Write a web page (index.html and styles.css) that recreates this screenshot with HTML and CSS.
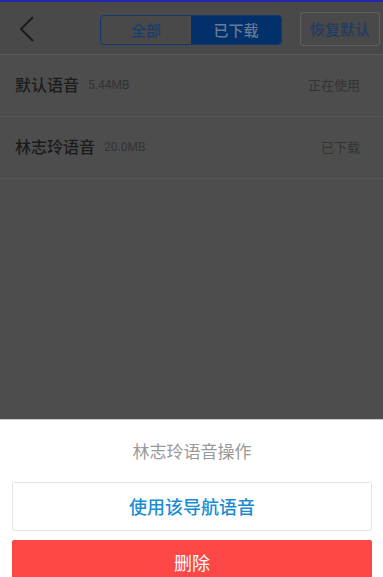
FILE: index.html
```html
<!DOCTYPE html>
<html>

	<head>
		<meta charset="UTF-8">
		<title>导航语音</title>
		<link rel="stylesheet" href="styles.css">
	</head>

	<body>
		<div class="status"></div>
		<div class="header">
			<span class="back">
				<svg width="16" height="26" viewBox="0 0 16 26"><path d="M14 1 L2 13 L14 25" fill="none" stroke="#1c1c1c" stroke-width="2"/></svg>
			</span>
			<div class="tabs">
				<span class="tab">全部</span>
				<span class="tab on">已下载</span>
			</div>
			<span class="reset">恢复默认</span>
		</div>
		<div class="list">
			<div class="row">
				<span class="name">默认语音</span><span class="size">5.44MB</span>
				<span class="state">正在使用</span>
			</div>
			<div class="row">
				<span class="name">林志玲语音</span><span class="size">20.0MB</span>
				<span class="state">已下载</span>
			</div>
		</div>
		<div class="sheet">
			<p class="sheet_title">林志玲语音操作</p>
			<div class="btn use">使用该导航语音</div>
			<div class="btn del">删除</div>
		</div>
	</body>

</html>
```

FILE: styles.css
```css
html, body {
	margin: 0;
	height: 100%;
}
body {
	background: #4d4d4d;
	font-family: "Noto Sans CJK SC", "Noto Sans", sans-serif;
	display: flex;
	flex-direction: column;
	overflow: hidden;
}
.status {
	height: 2px;
	background: #2327a8;
}
.header {
	height: 52px;
	background: #494949;
	border-bottom: 1px solid #5a5a5a;
	display: flex;
	align-items: center;
}
.back {
	width: 100px;
	padding-left: 19px;
	box-sizing: border-box;
	display: flex;
	margin-top: 2px;
}
.tabs {
	width: 182px;
	height: 30px;
	box-sizing: border-box;
	border: 1px solid #12396b;
	border-radius: 4px;
	display: flex;
	overflow: hidden;
	margin-top: 3px;
}
.tab {
	flex: 1;
	text-align: center;
	line-height: 28px;
	font-size: 15px;
	font-weight: 500;
	color: #173d6e;
}
.tab.on {
	background: #02306b;
	color: #687a96;
}
.reset {
	margin-left: 18px;
	width: 80px;
	height: 34px;
	box-sizing: border-box;
	border: 1px solid #5e5e5e;
	border-radius: 3px;
	font-size: 15px;
	font-weight: 500;
	color: #1f3c63;
	line-height: 32px;
	text-align: center;
	margin-top: 1px;
}
.row {
	height: 61px;
	border-bottom: 1px solid #575757;
	display: flex;
	align-items: center;
	padding: 0 23px 3px 15px;
	box-sizing: border-box;
	height: 62px;
}
.name {
	font-size: 16px;
	font-weight: 500;
	color: #1b1b1b;
}
.size {
	font-family: Roboto, "Liberation Sans", sans-serif;
	font-size: 12px;
	color: #333;
	margin-left: 9px;
	margin-top: 2px;
}
.state {
	margin-left: auto;
	font-size: 13px;
	color: #333;
}
.sheet {
	margin-top: auto;
	height: 157px;
	background: #fff;
	border-top: 1px solid #c8c8c8;
	padding: 0 11px 0 12px;
}
.sheet_title {
	margin: 0;
	height: 62px;
	line-height: 62px;
	text-align: center;
	font-size: 17px;
	color: #999;
}
.btn {
	text-align: center;
	font-size: 18px;
	border-radius: 2px;
}
.use {
	height: 49px;
	box-sizing: border-box;
	border: 1px solid #e4e4e4;
	line-height: 47px;
	color: #1b8bd4;
	font-weight: 500;
}
.del {
	margin-top: 9px;
	height: 44px;
	line-height: 44px;
	background: #fd4646;
	color: #fff;
}
```
